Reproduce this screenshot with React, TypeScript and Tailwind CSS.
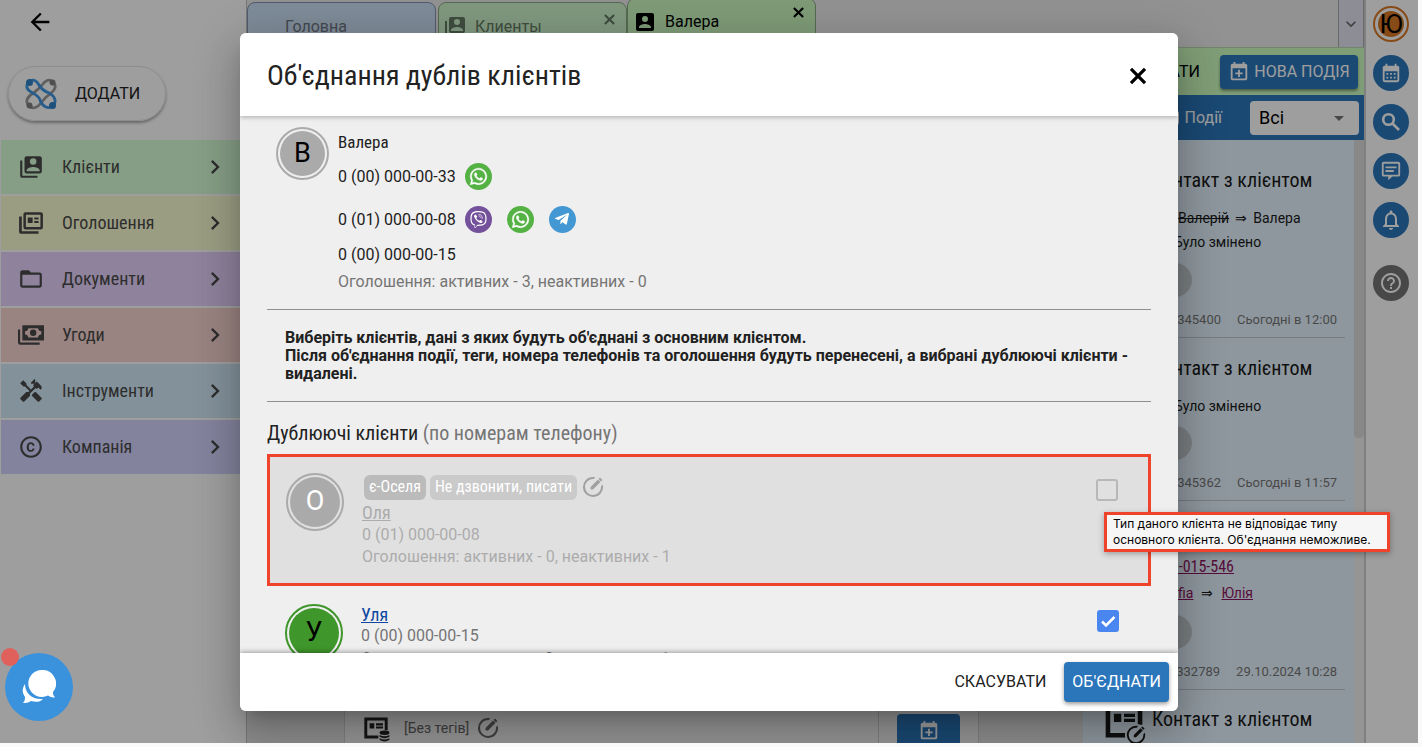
import { useState, type ReactNode } from "react";
import {
  MdArrowBack,
  MdArrowDropDown,
  MdCalendarMonth,
  MdChevronRight,
  MdCopyright,
  MdFolderOpen,
  MdHandyman,
  MdHelpOutline,
  MdKeyboardArrowDown,
  MdNotificationsNone,
} from "react-icons/md";
import { FaTelegramPlane, FaViber, FaWhatsapp } from "react-icons/fa";

const condensed = "font-['Roboto_Condensed',Roboto,sans-serif]";

function Icon({ d, className = "size-6" }: { d: string; className?: string }) {
  return (
    <svg viewBox="0 0 24 24" fill="currentColor" fillRule="evenodd" className={`shrink-0 ${className}`} aria-hidden="true">
      <path d={d} />
    </svg>
  );
}

const paths = {
  clients:
    "M4,6H2V20A2,2 0 0,0 4,22H18V20H4V6M20,2H8A2,2 0 0,0 6,4V16A2,2 0 0,0 8,18H20A2,2 0 0,0 22,16V4A2,2 0 0,0 20,2M17,7A3,3 0 0,1 14,10A3,3 0 0,1 11,7A3,3 0 0,1 14,4A3,3 0 0,1 17,7M8,15C8,13 12,11.9 14,11.9C16,11.9 20,13 20,15V16H8V15Z",
  client:
    "M6,17C6,15 10,13.9 12,13.9C14,13.9 18,15 18,17V18H6M15,9A3,3 0 0,1 12,12A3,3 0 0,1 9,9A3,3 0 0,1 12,6A3,3 0 0,1 15,9M3,5V19A2,2 0 0,0 5,21H19A2,2 0 0,0 21,19V5A2,2 0 0,0 19,3H5C3.89,3 3,3.9 3,5Z",
  ads: "M1 6H3.500V19.500H19V22H3A2 2 0 0 1 1 20V6M7 2H21A2 2 0 0 1 23 4V16A2 2 0 0 1 21 18H7A2 2 0 0 1 5 16V4A2 2 0 0 1 7 2M7.300 4.300V15.700H20.700V4.300H7.300M9 7H13.500V12H9V7M15 7H19V8.800H15V7M15 10.200H19V12H15V10.200",
  deals:
    "M0 7H2V19H20V21H2A2 2 0 0 1 0 19V7M4 3H24V17H4V3M9.500 5.800A3 3 0 0 1 6.500 8.500V11.500A3 3 0 0 1 9.500 14.200H18.500A3 3 0 0 1 21.500 11.500V8.500A3 3 0 0 1 18.500 5.800H9.500M14 7A3 3 0 0 1 14 13A3 3 0 0 1 14 7",
  calendarPlus:
    "M19 19V8H5V19H19M16 1H18V3H19C20.11 3 21 3.9 21 5V19C21 20.11 20.11 21 19 21H5C3.89 21 3 20.1 3 19V5C3 3.89 3.89 3 5 3H6V1H8V3H16V1M11 9.5H13V12.5H16V14.5H13V17.5H11V14.5H8V12.5H11V9.5Z",
  edit: "M12 2A10 10 0 1 0 21.700 9.600L20 11.300A8 8 0 1 1 12.700 4L14.400 2.300A10 10 0 0 0 12 2M19 2.600L21.400 5L20 6.400L17.600 4L19 2.600M17 4.600L19.400 7L12 14.400H9.600V12L17 4.600",
  message:
    "M4 2H20A2 2 0 0 1 22 4V16A2 2 0 0 1 20 18H13.500L9 22V18H4A2 2 0 0 1 2 16V4A2 2 0 0 1 4 2M4 4V16H20V4H4M6 7H18V9H6V7M6 11H15V13H6V11",
  card: "M2 3H22V14H19.500V5.500H4.500V18.500H14V21H2V3M6.500 8H10.500V12.500H6.500V8M12 8H18V9.800H12V8M12 10.800H18V12.500H12V10.800",
};

function Cross({ className }: { className: string }) {
  return (
    <svg viewBox="0 0 24 24" fill="none" stroke="currentColor" strokeWidth="3" className={className} aria-hidden="true">
      <path d="M5.500 5.500L18.500 18.500M18.500 5.500L5.500 18.500" />
    </svg>
  );
}

function Avatar({ letter, size, disc }: { letter: string; size: string; disc: string }) {
  return (
    <div className={`flex shrink-0 rounded-full border-2 p-[2px] ${size}`}>
      <span className={`flex flex-1 items-center justify-center rounded-full text-[27px] ${disc}`}>{letter}</span>
    </div>
  );
}

function Messenger({ name, color, children }: { name: string; color: string; children: ReactNode }) {
  return (
    <a href="#" aria-label={name} className={`flex size-[27px] items-center justify-center rounded-full text-white ${color}`}>
      {children}
    </a>
  );
}

function WhatsApp() {
  return (
    <Messenger name="WhatsApp" color="bg-[#54b143]">
      <FaWhatsapp className="size-[19px]" stroke="white" strokeWidth="12" />
    </Messenger>
  );
}

function Logo() {
  return (
    <svg viewBox="0 0 32 32" className="size-8" fill="none" strokeWidth="2.800" strokeLinecap="round" aria-hidden="true">
      <g stroke="#9a9a9a">
        <path d="M28 4C24 0 20 3 17 7C14 11 11 13 7 16C2 19 0 24 4 28" />
        <path d="M28 4C32 8 30 12 26 15C22 18 19 21 16 25C13 29 8 32 4 28" />
      </g>
      <g stroke="#3f97e2">
        <path d="M4 4C8 0 12 3 14 7C16 11 19 13 24 15C30 18 32 24 28 28" />
        <path d="M4 4C0 8 2 12 6 14C11 17 14 18 15 22C17 28 23 32 28 28" />
      </g>
      <circle cx="4.500" cy="4.500" r="3.500" fill="#3182c8" />
      <circle cx="27.500" cy="27.500" r="3.500" fill="#3182c8" />
      <circle cx="27.500" cy="4.500" r="3" fill="#808080" />
      <circle cx="4.500" cy="27.500" r="3" fill="#808080" />
    </svg>
  );
}

const menu = [
  { label: "Клієнти", color: "bg-[#d8ffd8]", icon: <Icon d={paths.clients} className="size-[26px]" /> },
  { label: "Оголошення", color: "bg-[#fbfdd2]", icon: <Icon d={paths.ads} className="size-[26px]" /> },
  { label: "Документи", color: "bg-[#e5d2fc]", icon: <MdFolderOpen className="size-[26px]" /> },
  { label: "Угоди", color: "bg-[#f9d5d1]", icon: <Icon d={paths.deals} className="size-[26px]" /> },
  { label: "Інструменти", color: "bg-[#d4ebfb]", icon: <MdHandyman className="size-[26px]" /> },
  { label: "Компанія", color: "bg-[#d3d3ff]", icon: <MdCopyright className="size-[26px]" /> },
];

function Sidebar() {
  return (
    <aside className="flex w-[247px] shrink-0 flex-col border-r border-[#c0c0c0] bg-white">
      <div className="flex h-[66px] items-start pt-2 pl-[26px]">
        <button aria-label="Назад">
          <MdArrowBack className="size-[28px]" />
        </button>
      </div>
      <button className="ml-2 flex h-[55px] w-[158px] items-center gap-[18px] rounded-full border border-[#e4e4e4] pl-4 text-base text-[#222] shadow-[0_2px_3px_rgba(0,0,0,0.35)]">
        <Logo />
        ДОДАТИ
      </button>
      <nav className="mt-[19px] flex flex-col gap-[2px] pl-px">
        {menu.map((m) => (
          <a key={m.label} href="#" className={`flex h-[54px] items-center pr-[17px] pl-[17px] text-[#4a4a4a] ${m.color}`}>
            {m.icon}
            <span className={`ml-[18px] flex-1 text-lg ${condensed}`}>{m.label}</span>
            <MdChevronRight className="size-7" />
          </a>
        ))}
      </nav>
    </aside>
  );
}

function Tabs() {
  const tab = "flex w-[189px] shrink-0 rounded-t-lg border";
  return (
    <div className="flex h-[47px] bg-[#ececec]">
      <a href="#" className={`${tab} mt-[2px] border-[#8393b0] bg-[#cce0f5] pt-[12px] pl-[37px] text-base text-[#6c7480]`}>
        Головна
      </a>
      <div className={`${tab} mt-[2px] ml-[2px] border-[#8bab84] bg-[#d0f5cd] pt-[12px] pl-1 text-base text-[#667d66]`}>
        <Icon d={paths.clients} className="size-6" />
        <a href="#" className="ml-2 flex-1">
          Клиенты
        </a>
        <button aria-label="Закрити Клиенты" className="-mt-1 mr-2 self-start">
          <Cross className="size-[17px]" />
        </button>
      </div>
      <div className={`${tab} -mt-[2px] border-[#8bab84] bg-[#cbfac0] pt-[11px] pl-[5px] text-base text-black`}>
        <Icon d={paths.client} className="size-6" />
        <a href="#" className="ml-2 flex-1">
          Валера
        </a>
        <button aria-label="Закрити Валера" className="-mt-[6px] mr-2 self-start">
          <Cross className="size-[17px]" />
        </button>
      </div>
      <button aria-label="Усі вкладки" className="ml-auto flex w-[26px] items-center justify-center border-x border-[#aaa] bg-[#e4e4f2] text-[#666]">
        <MdKeyboardArrowDown className="size-5" />
      </button>
    </div>
  );
}

type EventProps = { height: string; id: string; date: string; title?: string; children: ReactNode };

function EventCard({ height, id, date, title, children }: EventProps) {
  return (
    <article className={`mr-[19px] ml-4 flex flex-col border-b border-[#c0c8cf] pl-[53px] ${height}`}>
      <h3 className={`h-6 text-xl leading-6 ${condensed}`}>{title}</h3>
      {children}
      <span className="mt-auto ml-[6px] size-[34px] rounded-full bg-[#c6cbd1]" />
      <footer className="mt-3 mr-2 mb-[6px] flex justify-end gap-4 text-[13px] leading-[22px] text-[#777]">
        <span>{id}</span>
        <time>{date}</time>
      </footer>
    </article>
  );
}

function Events() {
  return (
    <section className="flex w-[281px] shrink-0 flex-col">
      <div className="flex h-12 items-center justify-end gap-5 border-t border-[#b9d6b0] bg-[#cdffc0] pr-[6px]">
        <button className="text-base">ПОКАЗАТИ</button>
        <button className="flex h-[34px] w-[138px] items-center justify-center gap-1 rounded bg-[#2b76bb] text-base text-white shadow-[0_2px_3px_rgba(0,0,0,0.4)]">
          <Icon d={paths.calendarPlus} className="size-[22px]" />
          НОВА ПОДІЯ
        </button>
      </div>
      <div className="flex h-[45px] shrink-0 items-center justify-end bg-[#2b76bb] pr-[5px] text-white">
        <label className="flex items-center gap-[6px] text-base">
          <input type="checkbox" className="size-4 appearance-none rounded-sm border-2 border-white" />
          Події
        </label>
        <div className="relative ml-7">
          <select aria-label="Фільтр подій" className="h-[34px] w-[109px] appearance-none rounded bg-white pl-[9px] text-lg text-black">
            <option>Всі</option>
          </select>
          <MdArrowDropDown className="pointer-events-none absolute top-[5px] right-2 size-6 text-[#777]" />
        </div>
      </div>
      <div className="relative flex-1 overflow-hidden bg-[#e6f4ff] text-sm text-[#1a1a1a]">
        <EventCard height="h-[198px] pt-7" id="12345400" date="Сьогодні в 12:00" title="Контакт з клієнтом">
          <p className="mt-[14px] ml-[26px] flex gap-[6px] leading-6">
            <s>Валерій</s> <span>⇒</span> Валера
          </p>
          <p className="ml-[22px] leading-6">Було змінено</p>
        </EventCard>
        <EventCard height="h-[163px] pt-[18px]" id="12345362" date="Сьогодні в 11:57" title="Контакт з клієнтом">
          <p className="mt-[14px] ml-[22px] leading-6">Було змінено</p>
        </EventCard>
        <EventCard height="h-[189px] pt-[18px]" id="12332789" date="29.10.2024 10:28">
          <p className={`mt-3 flex justify-end pr-[111px] text-base leading-6 text-[#8d1560] ${condensed}`}>
            <a href="#" className="underline">
              0-015-546
            </a>
          </p>
          <p className="flex justify-end gap-2 pr-[92px] leading-7">
            <a href="#" className="text-[#8d1560] underline">
              Sofia
            </a>
            ⇒
            <a href="#" className="text-[#8d1560] underline">
              Юлія
            </a>
          </p>
        </EventCard>
        <article className="mt-[17px] flex pl-[19px]">
          <div className="relative">
            <Icon d={paths.card} className="-mt-2 size-[44px]" />
            <span className="absolute -right-px -bottom-[3px] rounded-full bg-[#e6f4ff]">
              <Icon d={paths.edit} className="size-[22px]" />
            </span>
          </div>
          <h3 className={`ml-[6px] text-xl leading-6 ${condensed}`}>Контакт з клієнтом</h3>
        </article>
        <span className="absolute top-0 right-0 h-full w-[10px] bg-[#f0f0f0]" />
        <span className="absolute top-0 right-0 h-[298px] w-[10px] rounded-b bg-[#dcdcdc]" />
      </div>
    </section>
  );
}

function Workspace() {
  return (
    <main className="flex min-w-0 flex-1 flex-col bg-[#e6e6e6]">
      <Tabs />
      <div className="flex min-h-0 flex-1">
        <div className="flex flex-1 items-end pl-[97px]">
          <div className="flex h-[52px] w-[635px] border-x border-[#cfcfcf] bg-[#f2f2f2] text-[#666]">
            <div className="flex flex-1 items-center border-r border-[#cfcfcf] pt-[22px] pl-[17px]">
              <div className="relative text-[#222]">
                <Icon d={paths.card} className="size-7" />
                <svg viewBox="0 0 10 11" className="absolute right-0 bottom-0 h-[12px] w-[11px]" fill="#222">
                  <ellipse cx="5" cy="2.500" rx="4.500" ry="2" />
                  <path d="M.5 4.500Q5 7 9.500 4.500V6.300Q5 9 .5 6.300ZM.5 7.500Q5 10 9.500 7.500V9Q5 12 .5 9Z" />
                </svg>
              </div>
              <span className="ml-[14px] text-sm">[Без тегів]</span>
              <button aria-label="Змінити теги" className="ml-[7px]">
                <Icon d={paths.edit} className="size-6" />
              </button>
            </div>
            <div className="flex w-[99px] items-end justify-center">
              <button aria-label="Нова подія" className="flex h-[29px] w-[63px] items-center justify-center rounded-t bg-[#2b76bb] pt-1 text-white">
                <Icon d={paths.calendarPlus} className="size-[22px]" />
              </button>
            </div>
          </div>
        </div>
        <Events />
      </div>
    </main>
  );
}

function Rail() {
  const round = "flex size-9 items-center justify-center rounded-full bg-[#2b76bb] text-white";
  return (
    <div className="flex w-[54px] shrink-0 flex-col items-center gap-[13px] border-l-2 border-[#cfcfcf] bg-white pt-[6px] pr-[2px]">
      <button className="flex size-9 rounded-full border-2 border-[#d97925] p-[3px] text-[26px] leading-none">
        <span className="flex flex-1 items-center justify-center rounded-full bg-[#d97925]">Ю</span>
      </button>
      <button aria-label="Календар" className={round}>
        <MdCalendarMonth className="size-[22px]" />
      </button>
      <button aria-label="Пошук" className={round}>
        <svg viewBox="0 0 24 24" className="size-6" fill="none" stroke="currentColor" strokeWidth="2.600" aria-hidden="true">
          <circle cx="9.500" cy="9.500" r="5.300" />
          <path d="M13.500 13.500L20 20" />
        </svg>
      </button>
      <button aria-label="Повідомлення" className={round}>
        <Icon d={paths.message} className="size-[22px]" />
      </button>
      <button aria-label="Сповіщення" className={round}>
        <MdNotificationsNone className="size-6" />
      </button>
      <button aria-label="Допомога" className="mt-[14px] flex size-9 items-center justify-center rounded-full bg-[#757575] text-white">
        <MdHelpOutline className="size-6" />
      </button>
    </div>
  );
}

function MergeDialog() {
  const [merge, setMerge] = useState(true);

  return (
    <div
      role="dialog"
      aria-labelledby="merge-title"
      className="flex max-h-[calc(100%-65px)] w-[938px] max-w-full flex-col overflow-hidden rounded-md bg-[#efefef] shadow-[0_11px_15px_-7px_rgba(0,0,0,0.2),0_24px_38px_3px_rgba(0,0,0,0.14),0_9px_46px_8px_rgba(0,0,0,0.12)]"
    >
      <header className="z-10 flex h-[83px] shrink-0 items-center justify-between bg-white pt-1 pr-[27px] pl-[27px] shadow-[0_1px_5px_rgba(0,0,0,0.3)]">
        <h2 id="merge-title" className={`text-[28px] text-[#222] ${condensed}`}>
          Об'єднання дублів клієнтів
        </h2>
        <button aria-label="Закрити">
          <Cross className="size-[26px]" />
        </button>
      </header>

      <div className="min-h-0 flex-1 overflow-hidden px-[27px] text-base text-[#212121]">
        <div className="flex gap-[9px] border-b border-[#8f8f8f] pt-[11px] pb-4 pl-[9px]">
          <Avatar letter="В" size="size-[53px] border-[#aaa]" disc="bg-[#aaa] text-black" />
          <div>
            <div className={`mt-1 text-[17px] leading-[22px] ${condensed}`}>Валера</div>
            <div className="mt-[10px] flex h-[27px] items-center gap-[9px]">
              <span className="pt-[2px]">0 (00) 000-00-33</span>
              <WhatsApp />
            </div>
            <div className="mt-4 flex h-[27px] items-center">
              <span className="mr-[9px] pt-[2px]">0 (01) 000-00-08</span>
              <div className="flex gap-[15px]">
                <Messenger name="Viber" color="bg-[#74519b]">
                  <FaViber className="size-[17px]" />
                </Messenger>
                <WhatsApp />
                <Messenger name="Telegram" color="bg-[#4398d3]">
                  <FaTelegramPlane className="size-4" />
                </Messenger>
              </div>
            </div>
            <div className="mt-[10px] leading-6">0 (00) 000-00-15</div>
            <div className="mt-1 leading-[22px] text-[#757575]">Оголошення: активних - 3, неактивних - 0</div>
          </div>
        </div>

        <p className="border-b border-[#8f8f8f] pt-[19px] pb-[18px] pl-[18px] leading-[18px] font-bold">
          Виберіть клієнтів, дані з яких будуть об'єднані з основним клієнтом.
          <br />
          Після об'єднання події, теги, номера телефонів та оголошення будуть перенесені, а вибрані дублюючі клієнти -
          видалені.
        </p>

        <h3 className={`pt-[18px] pb-[8px] text-xl leading-[26px] ${condensed}`}>
          Дублюючі клієнти <span className="text-[#757575]">(по номерам телефону)</span>
        </h3>

        <div className="flex h-[132px] border-[3px] border-[#f0432b] bg-[#e0e0e0] pt-4 pr-[30px] pl-4 text-[#acacac]">
          <Avatar letter="О" size="size-[58px] border-[#aaa]" disc="bg-[#aaa] text-white" />
          <div className="ml-[18px] flex-1">
            <div className={`ml-[2px] flex items-center gap-1 pt-[2px] ${condensed}`}>
              <span className="flex h-[25px] items-center rounded-md bg-[#bbb] px-[5px] text-base text-white">є-Оселя</span>
              <span className="flex h-[25px] items-center rounded-md bg-[#cacaca] px-[5px] text-base text-white">
                Не дзвонити, писати
              </span>
              <button aria-label="Змінити теги Олі" className="text-[#a0a0a0]">
                <Icon d={paths.edit} className="size-6" />
              </button>
            </div>
            <a href="#" className={`mt-[2px] block text-lg leading-[22px] underline ${condensed}`}>
              Оля
            </a>
            <div className="leading-[22px]">0 (01) 000-00-08</div>
            <div className="leading-[21px]">Оголошення: активних - 0, неактивних - 1</div>
          </div>
          <input
            type="checkbox"
            disabled
            aria-label="Об'єднати Оля"
            className="mt-[6px] size-[22px] appearance-none rounded-[3px] border-2 border-[#b8b8b8]"
          />
        </div>

        <div className="flex pt-[18px] pr-8 pl-[18px] text-[#757575]">
          <Avatar letter="У" size="size-[58px] border-[#3f962b]" disc="bg-[#3f962b] text-black" />
          <div className="ml-[18px] flex-1">
            <a href="#" className={`block text-lg leading-[21px] text-[#0d47a1] underline ${condensed}`}>
              Уля
            </a>
            <div className="leading-[22px]">0 (00) 000-00-15</div>
            <div className="leading-[24px]">Оголошення: активних - 0, неактивних - 1</div>
          </div>
          <div className="relative mt-[6px] size-[22px]">
            <input
              type="checkbox"
              checked={merge}
              onChange={() => setMerge(!merge)}
              aria-label="Об'єднати Уля"
              className="block size-[22px] appearance-none rounded-[3px] border-2 border-[#b8b8b8] checked:border-[#4a86f0] checked:bg-[#4a86f0]"
            />
            {merge && (
              <svg viewBox="0 0 22 22" className="pointer-events-none absolute inset-0" fill="none" stroke="white" strokeWidth="2.500">
                <path d="M5 11.500L9 15.500L17.500 7" />
              </svg>
            )}
          </div>
        </div>
      </div>

      <footer className="z-10 flex h-[58px] shrink-0 items-center justify-end gap-[18px] bg-white pr-[9px] text-base shadow-[0_-1px_5px_rgba(0,0,0,0.35)]">
        <button className="text-[#212121]">СКАСУВАТИ</button>
        <button className="h-10 rounded bg-[#2b76bb] px-2 text-white shadow-[0_2px_4px_rgba(0,0,0,0.4)]">ОБ'ЄДНАТИ</button>
      </footer>
    </div>
  );
}

export default function App() {
  return (
    <div className="h-screen bg-[#fafafa] pr-1 pb-1 font-[Roboto,sans-serif]">
      <div className="relative flex h-full overflow-hidden">
        <Sidebar />
        <Workspace />
        <Rail />

        {/* modal layer */}
        <div className="absolute inset-0 flex items-center justify-center bg-black/38">
          <MergeDialog />
        </div>

        <div
          role="tooltip"
          className="absolute top-[512px] left-[1104px] border-[3px] border-[#f0432b] bg-[#f6f6f6] py-px pr-4 pl-[6px] font-[Inter,sans-serif] text-xs leading-4 text-black shadow-[0_2px_6px_rgba(0,0,0,0.3)]"
        >
          Тип даного клієнта не відповідає типу
          <br />
          основного клієнта. Об'єднання неможливе.
        </div>

        <button
          aria-label="Чат"
          className="absolute bottom-[22px] left-[5px] flex size-[68px] items-center justify-center rounded-full bg-[#3a91dc] text-white"
        >
          <svg viewBox="0 0 34 34" className="size-[34px]" fill="currentColor">
            <path d="M3 14C-1 20 1 24 3 27Q3.500 30 1 33Q6 33.500 9 31C14 32.500 18 32 21 29C11 30 3 24 3 14Z" />
            <path d="M20 0A13.500 13.500 0 1 0 26 25.500Q29 28 33 27.500Q30.500 25 31 22A13.500 13.500 0 0 0 20 0Z" />
          </svg>
          <span className="absolute -top-[5px] -left-[4px] size-[18px] rounded-full bg-[#e0615c]" />
        </button>
      </div>
    </div>
  );
}
